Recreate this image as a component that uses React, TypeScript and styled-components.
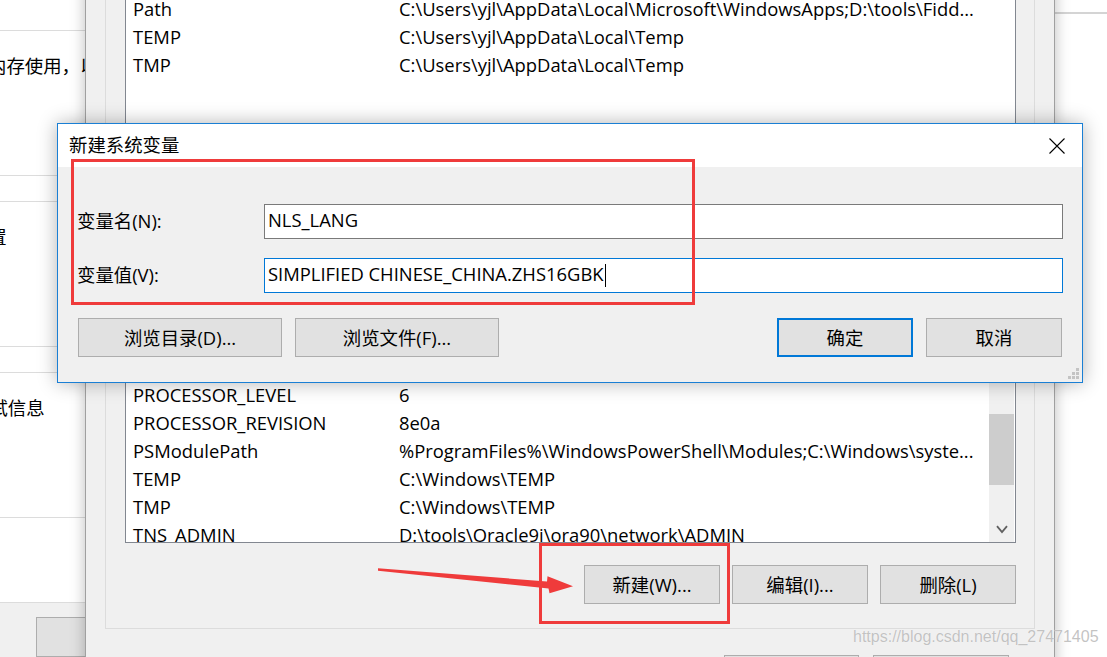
import { createGlobalStyle, styled } from 'styled-components';

const FONT = `"Open Sans", "Noto Sans CJK SC", sans-serif`;
const TEXT = '18.4px';

const GlobalStyle = createGlobalStyle`
  html, body {
    margin: 0;
    padding: 0;
    background: #ffffff;
  }
  body {
    font-family: ${FONT};
    font-size: ${TEXT};
    color: #000000;
  }
  * {
    box-sizing: border-box;
  }
`;

const userVars = [
  { name: 'Path', value: 'C:\\Users\\yjl\\AppData\\Local\\Microsoft\\WindowsApps;D:\\tools\\Fidd...' },
  { name: 'TEMP', value: 'C:\\Users\\yjl\\AppData\\Local\\Temp' },
  { name: 'TMP', value: 'C:\\Users\\yjl\\AppData\\Local\\Temp' }
];

const systemVars = [
  { name: 'Path', value: 'C:\\Windows\\system32;C:\\Windows;C:\\Windows\\System32\\Wbem' },
  { name: 'PATHEXT', value: '.COM;.EXE;.BAT;.CMD;.VBS;.VBE;.JS;.JSE;.WSF;.WSH;.MSC' },
  { name: 'PROCESSOR_ARCHITECTURE', value: 'AMD64' },
  { name: 'PROCESSOR_IDENTIFIER', value: 'Intel64 Family 6 Model 142 Stepping 10, GenuineIntel' },
  { name: 'PROCESSOR_LEVEL', value: '6' },
  { name: 'PROCESSOR_REVISION', value: '8e0a' },
  { name: 'PSModulePath', value: '%ProgramFiles%\\WindowsPowerShell\\Modules;C:\\Windows\\syste...' },
  { name: 'TEMP', value: 'C:\\Windows\\TEMP' },
  { name: 'TMP', value: 'C:\\Windows\\TEMP' },
  { name: 'TNS_ADMIN', value: 'D:\\tools\\Oracle9i\\ora90\\network\\ADMIN' }
];

const propsGroups = [
  { id: 0, text: '内存使用，以及虚拟内存', shift: -12 },
  { id: 1, text: '桌面设置', shift: -67 },
  { id: 2, text: '调试信息', shift: -29 }
];

const App = () => {
  return (
    <Desktop>
      <GlobalStyle />

      <BackWindow>
        <BackWindowBar />
      </BackWindow>

      <SysPropsWindow>
        <PropsPage>
          {propsGroups.map((group) => (
            <PropsGroup key={group.id}>
              <PropsGroupText $shift={group.shift}>{group.text}</PropsGroupText>
            </PropsGroup>
          ))}
        </PropsPage>
        <PropsFooter>
          <PropsButton />
        </PropsFooter>
      </SysPropsWindow>

      <EnvWindow>
        <EnvGroup>
          <VarList $height={236}>
            <VarRows>
              {userVars.map((v) => (
                <VarRow key={v.name}>
                  <VarName>{v.name}</VarName>
                  <VarValue>{v.value}</VarValue>
                </VarRow>
              ))}
            </VarRows>
          </VarList>

          <VarList $height={274} $gap={38}>
            <VarRows>
              {systemVars.map((v) => (
                <VarRow key={v.name + v.value}>
                  <VarName>{v.name}</VarName>
                  <VarValue>{v.value}</VarValue>
                </VarRow>
              ))}
            </VarRows>
            <ScrollTrack>
              <ScrollThumb $top={144} $height={71} />
              <ScrollArrow>
                <svg width="12" height="9" viewBox="0 0 12 9">
                  <path d="M1 1.2 L6 7.2 L11 1.2" fill="none" stroke="#606060" strokeWidth="1.8" />
                </svg>
              </ScrollArrow>
            </ScrollTrack>
          </VarList>

          <EnvButtonRow>
            <EnvButton>新建(W)...</EnvButton>
            <EnvButton>编辑(I)...</EnvButton>
            <EnvButton>删除(L)</EnvButton>
          </EnvButtonRow>
        </EnvGroup>

        <EnvFooter>
          <EnvButton $width={135}>确定</EnvButton>
          <EnvButton>取消</EnvButton>
        </EnvFooter>
      </EnvWindow>

      <Dialog>
        <DialogTitleBar>
          <DialogTitle>新建系统变量</DialogTitle>
          <CloseButton>
            <svg width="16" height="16" viewBox="0 0 16 16">
              <path d="M0.5 0.5 L15.5 15.5 M15.5 0.5 L0.5 15.5" stroke="#000" strokeWidth="1.1" />
            </svg>
          </CloseButton>
        </DialogTitleBar>
        <DialogBody>
          <FormGrid>
            <FieldLabel>变量名(N):</FieldLabel>
            <FieldInput>NLS_LANG</FieldInput>
            <FieldLabel>变量值(V):</FieldLabel>
            <FieldInput $focused>
              SIMPLIFIED CHINESE_CHINA.ZHS16GBK
              <Caret />
            </FieldInput>
          </FormGrid>
          <DialogButtonRow>
            <ButtonGroup>
              <DialogButton $width={204}>浏览目录(D)...</DialogButton>
              <DialogButton $width={204}>浏览文件(F)...</DialogButton>
            </ButtonGroup>
            <ButtonGroup>
              <DialogButton $width={136} $primary>
                确定
              </DialogButton>
              <DialogButton $width={136}>取消</DialogButton>
            </ButtonGroup>
          </DialogButtonRow>
        </DialogBody>
        <ResizeGrip>
          <svg width="12" height="12" viewBox="0 0 12 12">
            <rect x="8" y="0" width="3" height="3" fill="#c4c4c4" />
            <rect x="4" y="4" width="3" height="3" fill="#c4c4c4" />
            <rect x="8" y="4" width="3" height="3" fill="#c4c4c4" />
            <rect x="0" y="8" width="3" height="3" fill="#c4c4c4" />
            <rect x="4" y="8" width="3" height="3" fill="#c4c4c4" />
            <rect x="8" y="8" width="3" height="3" fill="#c4c4c4" />
          </svg>
        </ResizeGrip>
      </Dialog>

      <RedFrame $left={71} $top={159} $width={624} $height={146} />
      <RedFrame $left={539} $top={543} $width={191} $height={81} />

      <ArrowMark width="220" height="50" viewBox="370 556 220 50">
        <polygon
          points="378,568.3 547,581.5 547.5,576.3 573,586.2 549.5,593.3 548.5,588.6 378,570.8"
          fill="#ef3b3b"
        />
      </ArrowMark>

      <Watermark>https://blog.csdn.net/qq_27471405</Watermark>
    </Desktop>
  );
};

const Desktop = styled.div`
  position: relative;
  width: 1107px;
  height: 657px;
  overflow: hidden;
  background: #ffffff;
`;

/* window behind, on the right */
const BackWindow = styled.div`
  position: absolute;
  left: 1000px;
  top: 0;
  width: 120px;
  height: 657px;
  background: #ffffff;
  z-index: 0;
`;

const BackWindowBar = styled.div`
  height: 14px;
  border-bottom: 2px solid #d4d4d4;
`;

/* system properties window on the left */
const SysPropsWindow = styled.div`
  position: absolute;
  left: 0;
  top: 0;
  width: 300px;
  height: 657px;
  display: flex;
  flex-direction: column;
  z-index: 1;
`;

const PropsPage = styled.div`
  height: 633px;
  padding-top: 30px;
  background: #ffffff;
  border-bottom: 1px solid #dcdcdc;
  overflow: hidden;
`;

const PropsGroup = styled.div`
  height: 146px;
  margin-bottom: 25px;
  padding-top: 23px;
  border-top: 1px solid #dcdcdc;
  border-bottom: 1px solid #dcdcdc;
`;

const PropsGroupText = styled.div<{ $shift: number }>`
  margin-left: ${(p) => p.$shift}px;
  line-height: 24px;
  white-space: nowrap;
`;

const PropsFooter = styled.div`
  flex: 1;
  background: #f0f0f0;
  padding: 14px 0 0 36px;
`;

const PropsButton = styled.div`
  width: 136px;
  height: 40px;
  background: #e1e1e1;
  border: 1px solid #adadad;
`;

/* environment variables window */
const EnvWindow = styled.div`
  position: absolute;
  left: 85px;
  top: -20px;
  width: 970px;
  height: 720px;
  background: #f0f0f0;
  border-left: 1px solid #a0a0a0;
  border-right: 1px solid #a0a0a0;
  box-shadow: 0 0 14px rgba(0, 0, 0, 0.26);
  z-index: 2;
`;

const EnvGroup = styled.div`
  margin: 5px 19px 0 19px;
  padding: 9px 18px 24px 19px;
  border: 1px solid #dcdcdc;
`;

const VarList = styled.div<{ $height: number; $gap?: number }>`
  display: flex;
  height: ${(p) => p.$height}px;
  margin-top: ${(p) => p.$gap || 0}px;
  background: #ffffff;
  border: 1px solid #828790;
  overflow: hidden;
`;

const VarRows = styled.div`
  flex: 1;
  min-width: 0;
`;

const VarRow = styled.div`
  display: flex;
  height: 28px;
  padding-bottom: 3px;
  align-items: center;
  white-space: nowrap;
`;

const VarName = styled.div`
  width: 273px;
  flex-shrink: 0;
  padding-left: 7px;
`;

const VarValue = styled.div`
  flex: 1;
  overflow: hidden;
`;

const ScrollTrack = styled.div`
  display: flex;
  flex-direction: column;
  width: 25px;
  margin-right: 1px;
  background: #f0f0f0;
`;

const ScrollThumb = styled.div<{ $top: number; $height: number }>`
  margin-top: ${(p) => p.$top}px;
  height: ${(p) => p.$height}px;
  background: #cdcdcd;
`;

const ScrollArrow = styled.div`
  margin-top: auto;
  height: 25px;
  display: flex;
  align-items: center;
  justify-content: center;
  padding-left: 1px;
`;

const EnvButtonRow = styled.div`
  display: flex;
  justify-content: flex-end;
  gap: 12px;
  margin-top: 22px;
`;

const EnvButton = styled.div<{ $width?: number }>`
  width: ${(p) => p.$width || 136}px;
  height: 39px;
  padding-bottom: 2px;
  display: flex;
  align-items: center;
  justify-content: center;
  background: #e1e1e1;
  border: 1px solid #adadad;
`;

const EnvFooter = styled.div`
  display: flex;
  justify-content: flex-end;
  gap: 14px;
  margin-top: 26px;
  padding-right: 45px;
`;

/* new system variable dialog */
const Dialog = styled.div`
  position: absolute;
  left: 57px;
  top: 123px;
  width: 1026px;
  height: 260px;
  display: flex;
  flex-direction: column;
  border: 1px solid #1a7fd4;
  background: #f0f0f0;
  box-shadow: 0 0 18px rgba(0, 0, 0, 0.3);
  z-index: 3;
`;

const DialogTitleBar = styled.div`
  display: flex;
  align-items: center;
  justify-content: space-between;
  height: 43px;
  background: #ffffff;
`;

const DialogTitle = styled.div`
  padding: 0 0 3px 11px;
`;

const CloseButton = styled.div`
  display: flex;
  width: 16px;
  height: 16px;
  margin-right: 17px;
`;

const DialogBody = styled.div`
  flex: 1;
  padding: 37px 19px 0 19px;
`;

const FormGrid = styled.div`
  display: grid;
  grid-template-columns: 187px 1fr;
  row-gap: 19px;
  align-items: center;
`;

const FieldLabel = styled.div`
  padding-bottom: 3px;
  white-space: nowrap;
`;

const FieldInput = styled.div<{ $focused?: boolean }>`
  display: flex;
  align-items: center;
  height: 35px;
  padding: 0 0 4px 3px;
  background: #ffffff;
  border: 1px solid ${(p) => (p.$focused ? '#0078d7' : '#7a7a7a')};
  white-space: nowrap;
`;

const Caret = styled.span`
  display: inline-block;
  width: 1px;
  height: 23px;
  margin: 3px 0 0 1px;
  background: #000000;
`;

const DialogButtonRow = styled.div`
  display: flex;
  justify-content: space-between;
  margin-top: 25px;
  padding: 0 1px;
`;

const ButtonGroup = styled.div`
  display: flex;
  gap: 13px;
`;

const DialogButton = styled.div<{ $width: number; $primary?: boolean }>`
  width: ${(p) => p.$width}px;
  height: 39px;
  padding-bottom: 1px;
  display: flex;
  align-items: center;
  justify-content: center;
  background: #e1e1e1;
  border: ${(p) => (p.$primary ? '2px solid #0078d7' : '1px solid #adadad')};
`;

const ResizeGrip = styled.div`
  position: absolute;
  right: 2px;
  bottom: 2px;
  display: flex;
`;

/* annotations drawn over the screenshot */
const RedFrame = styled.div<{ $left: number; $top: number; $width: number; $height: number }>`
  position: absolute;
  left: ${(p) => p.$left}px;
  top: ${(p) => p.$top}px;
  width: ${(p) => p.$width}px;
  height: ${(p) => p.$height}px;
  border: 3px solid #ef3b3b;
  z-index: 4;
`;

const ArrowMark = styled.svg`
  position: absolute;
  left: 370px;
  top: 556px;
  z-index: 4;
`;

const Watermark = styled.div`
  position: absolute;
  left: 853px;
  top: 628px;
  font-family: 'Liberation Sans', Arial, sans-serif;
  font-size: 16px;
  line-height: 18px;
  color: rgba(175, 175, 175, 0.75);
  text-shadow: 0 0 1px #ffffff;
  white-space: nowrap;
  z-index: 4;
`;

export default App;
